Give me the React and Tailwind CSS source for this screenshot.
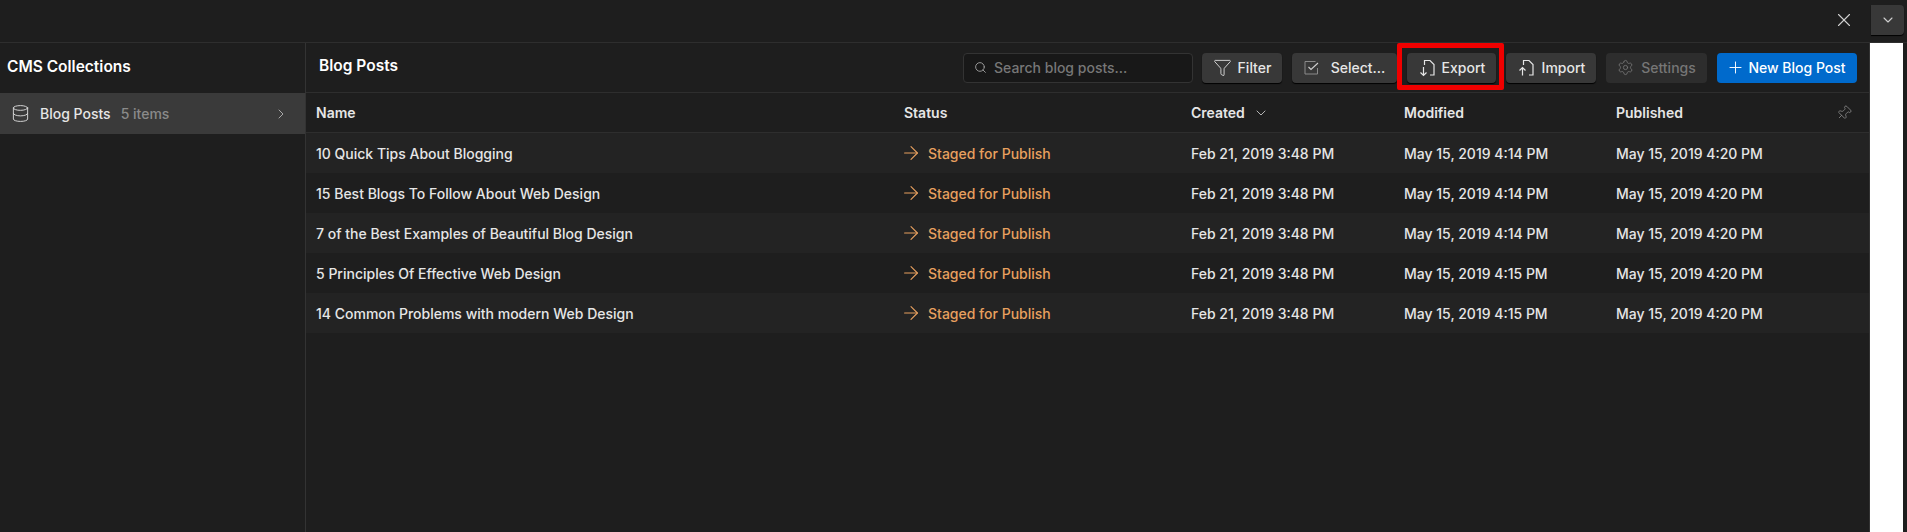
import React from 'react';
import { ArrowRight, ChevronDown, ChevronRight, Database, Filter, Pin, Plus, Search, Settings, X } from 'lucide-react';

const posts = [
  { name: '10 Quick Tips About Blogging', modified: 'May 15, 2019 4:14 PM' },
  { name: '15 Best Blogs To Follow About Web Design', modified: 'May 15, 2019 4:14 PM' },
  { name: '7 of the Best Examples of Beautiful Blog Design', modified: 'May 15, 2019 4:14 PM' },
  { name: '5 Principles Of Effective Web Design', modified: 'May 15, 2019 4:15 PM' },
  { name: '14 Common Problems with modern Web Design', modified: 'May 15, 2019 4:15 PM' },
];

function FileArrow({ up }) {
  return (
    <svg width="18" height="18" viewBox="0 0 18 18" fill="none" stroke="currentColor" strokeWidth="1.2" className="shrink-0">
      <path d="M6.5 6V1.5h5.5l4 4v10.5h-4" />
      {up ? <path d="M5.5 16.5V8.5M2.5 11.5l3-3 3 3" /> : <path d="M5.5 8v8.5M2.5 13.5l3 3 3-3" />}
    </svg>
  );
}

function SelectBox() {
  return (
    <svg width="15" height="15" viewBox="0 0 15 15" fill="none" className="shrink-0">
      <path d="M11.5 1.5H1v12.5h12.5V8" stroke="#8a8a8a" />
      <path d="M4.5 7l2.5 2.5L14 3" stroke="#d0d0d0" strokeWidth="1.1" />
    </svg>
  );
}

function ToolButton({ children, className = '' }) {
  return (
    <button className={`h-[30px] flex items-center justify-center rounded bg-[#383838] text-[#e6e6e6] text-[14px] font-medium shadow-[0_1px_1px_#000] ${className}`}>
      {children}
    </button>
  );
}

export default function App() {
  return (
    <div className="h-[532px] w-[1907px] overflow-hidden bg-[#1e1e1e] font-['Inter',sans-serif] text-[14px] font-medium text-[#e6e6e6] flex flex-col">
      <div className="h-[43px] shrink-0 border-b border-[#2e2e2e] flex items-center justify-end pb-[2px]">
        <X size={22} strokeWidth={1.2} className="text-[#d0d0d0] mr-[16px]" />
        <div className="w-[33px] h-[30px] mr-[3px] rounded-r bg-[#383838] flex items-center justify-center shadow-[0_1px_1px_#000]">
          <ChevronDown size={16} strokeWidth={1.6} className="text-[#d0d0d0]" />
        </div>
      </div>

      <div className="flex-1 flex min-h-0">
        <aside className="w-[306px] shrink-0 border-r border-[#333]">
          <div className="h-[50px] flex items-center pl-[7px] pb-[3px] text-[15.5px] font-semibold text-white">CMS Collections</div>
          <div className="h-[41px] bg-[#3a3a3a] flex items-center pl-[11px] pr-[16px]">
            <Database size={19} strokeWidth={1.2} className="text-[#d8d8d8] mr-[10px]" />
            <span>Blog Posts</span>
            <span className="ml-[10px] text-[#8a8a8a]">5 items</span>
            <ChevronRight size={16} strokeWidth={1.5} className="ml-auto text-[#a8a8a8]" />
          </div>
        </aside>

        <main className="w-[1564px] shrink-0 border-r border-[#333]">
          <div className="h-[50px] border-b border-[#2e2e2e] flex items-center pl-[13px] pr-[12px]">
            <h2 className="text-[15.5px] font-semibold text-white pb-[3px]">Blog Posts</h2>
            <div className="ml-auto flex items-center">
              <div className="w-[230px] h-[30px] rounded border border-[#333] bg-[#181818] flex items-center pl-[10px] mr-[9px] text-[#777]">
                <Search size={13} strokeWidth={1.7} className="text-[#a0a0a0] mr-[7px]" />
                Search blog posts...
              </div>
              <ToolButton className="w-[80px] gap-[6px] mr-[10px]">
                <Filter size={19} strokeWidth={1.1} />
                Filter
              </ToolButton>
              <ToolButton className="w-[105px] gap-[12px] mr-[10px]">
                <SelectBox />
                Select...
              </ToolButton>
              <div className="relative mr-[10px]">
                <ToolButton className="w-[89px] gap-[6px]">
                  <FileArrow />
                  Export
                </ToolButton>
                <div className="absolute -left-[10px] -top-[10px] -right-[8px] -bottom-[7px] border-[5px] border-[#f00000] rounded-[2px]"></div>
              </div>
              <ToolButton className="w-[90px] gap-[7px] mr-[10px]">
                <FileArrow up />
                Import
              </ToolButton>
              <button className="w-[101px] h-[30px] mr-[10px] rounded bg-[#2d2d2d] text-[#767676] flex items-center justify-center gap-[7px]">
                <Settings size={17} strokeWidth={1.2} />
                Settings
              </button>
              <button className="w-[140px] h-[30px] pr-[2px] rounded bg-[#006acc] text-white flex items-center justify-center gap-[3px]">
                <Plus size={19} strokeWidth={1.2} />
                New Blog Post
              </button>
            </div>
          </div>

          <div className="h-[40px] border-b border-[#2e2e2e] grid grid-cols-[588px_287px_213px_212px_1fr] items-center pl-[10px] font-semibold">
            <div>Name</div>
            <div>Status</div>
            <div className="flex items-center gap-[8px]">
              Created
              <ChevronDown size={16} strokeWidth={1.4} className="text-[#c0c0c0]" />
            </div>
            <div>Modified</div>
            <div className="flex items-center justify-between pr-[17px]">
              Published
              <Pin size={16} strokeWidth={1.2} className="rotate-45 text-[#8a8a8a]" />
            </div>
          </div>

          {posts.map((post, i) => (
            <div
              key={post.name}
              className={`h-[40px] grid grid-cols-[588px_287px_213px_212px_1fr] items-center pl-[10px] ${i % 2 === 0 ? 'bg-[#232323]' : 'bg-[#1e1e1e]'}`}
            >
              <div>{post.name}</div>
              <div className="flex items-center gap-[6px] text-[#e8a05f]">
                <ArrowRight size={22} strokeWidth={1.2} className="-ml-[4px]" />
                Staged for Publish
              </div>
              <div>Feb 21, 2019 3:48 PM</div>
              <div>{post.modified}</div>
              <div>May 15, 2019 4:20 PM</div>
            </div>
          ))}
        </main>

        <div className="w-[33px] shrink-0 bg-white"></div>
        <div className="flex-1"></div>
      </div>
    </div>
  );
}
